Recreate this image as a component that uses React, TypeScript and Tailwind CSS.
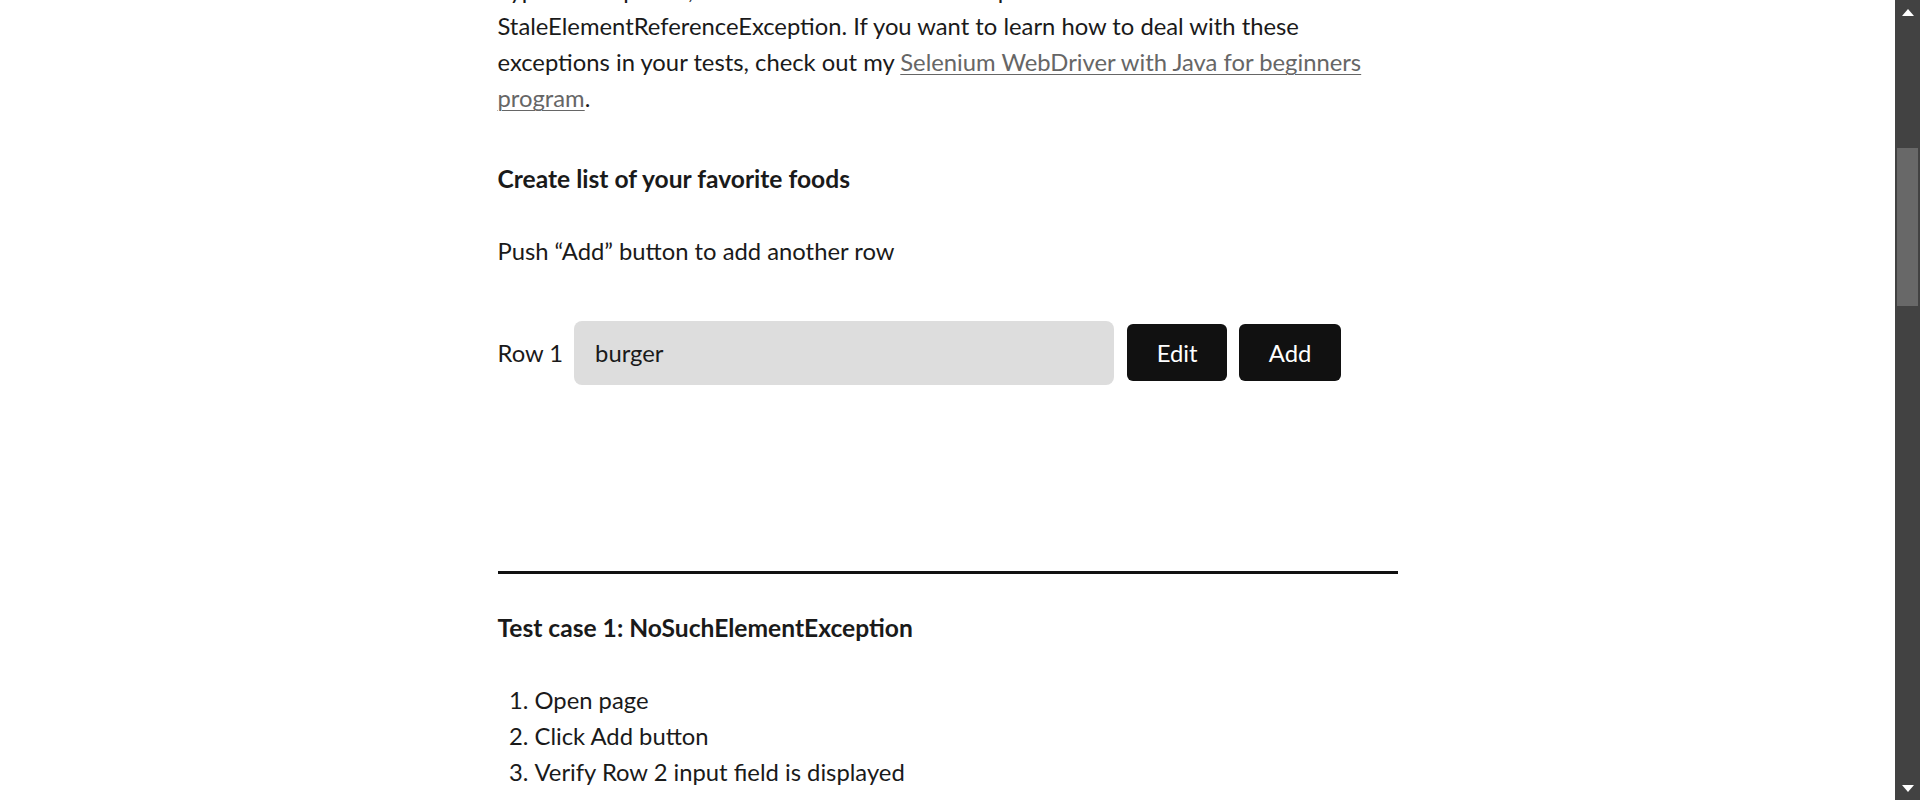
export default function App() {
  return (
    <div className="flex h-[800px] w-full overflow-hidden bg-white font-['Lato','Noto_Sans',sans-serif] text-[23.8px] leading-[36px] text-[#1a1a1a]">
      <main className="flex-1 overflow-hidden">
        <div className="mx-auto mt-[-27.6px] w-[900px]">
          <p>
            Typical exceptions, such as NoSuchElementException and
            <br />
            StaleElementReferenceException. If you want to learn how to deal with these
            <br />
            exceptions in your tests, check out my{" "}
            <a href="#" className="text-[#666] underline underline-offset-[3px] decoration-1">
              Selenium WebDriver with Java for beginners
              <br />
              program
            </a>
            .
          </p>

          <h3 className="mt-[44.4px] text-[24.6px] font-bold">Create list of your favorite foods</h3>

          <p className="mt-[36.2px]">Push “Add” button to add another row</p>

          <div className="mt-[52px] flex items-center">
            <label className="mr-[11px]">Row 1</label>
            <input
              type="text"
              defaultValue="burger"
              className="h-[64px] w-[540px] rounded-[8px] bg-[#dddddd] px-[21px] text-[23.8px] text-[#1a1a1a] outline-none"
            />
            <button className="ml-[13px] h-[57px] w-[100px] rounded-[6px] bg-[#111111] text-white">
              Edit
            </button>
            <button className="ml-[12px] h-[57px] w-[102px] rounded-[6px] bg-[#111111] text-white">
              Add
            </button>
          </div>

          <hr className="mt-[186px] border-0 border-t-[3px] border-[#111111]" />

          <h3 className="mt-[36px] text-[24.6px] font-bold">Test case 1: NoSuchElementException</h3>

          <ol className="mt-[36.4px] list-decimal pl-[37px]">
            <li>Open page</li>
            <li>Click Add button</li>
            <li>Verify Row 2 input field is displayed</li>
          </ol>
        </div>
      </main>

      <div className="flex w-[25px] flex-col bg-[#424242]">
        <div className="flex h-[24px] items-center justify-center">
          <svg width="12" height="7" viewBox="0 0 12 7">
            <path d="M6 0 L12 7 L0 7 Z" fill="#ffffff" />
          </svg>
        </div>
        <div className="mx-[2px] mt-[124px] h-[158px] bg-[#686868]" />
        <div className="flex-1" />
        <div className="flex h-[24px] items-center justify-center">
          <svg width="12" height="7" viewBox="0 0 12 7">
            <path d="M0 0 L12 0 L6 7 Z" fill="#ffffff" />
          </svg>
        </div>
      </div>
    </div>
  );
}
